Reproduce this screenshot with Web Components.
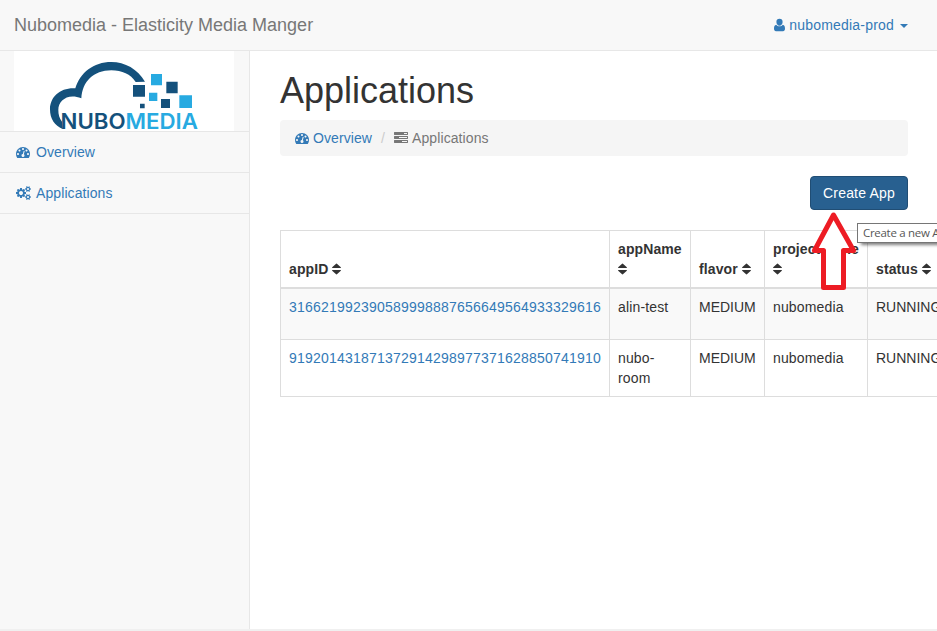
<!DOCTYPE html>
<html lang="en">
<head>
<meta charset="utf-8">
<title>Nubomedia - Elasticity Media Manger</title>
<style>
html,body{margin:0;height:100%;overflow:hidden}
body{font:14px/20px "Liberation Sans",Arial,sans-serif;color:#333;background:#fff}
</style>
</head>
<body>
<nubo-app></nubo-app>
<script>
const define=(name,html)=>customElements.define(name,class extends HTMLElement{
  constructor(){super();this.attachShadow({mode:'open'}).innerHTML=html;}
});

const GEAR='v140q0 16-149 31-12 27-30 52 51 113 51 138 0 4-4 7-122 71-124 71-8 0-46-47t-52-68q-20 2-30 2t-30-2q-14 21-52 68t-46 47q-2 0-124-71-4-3-4-7 0-25 51-138-18-25-30-52-149-15-149-31v-140q0-16 149-31 13-29 30-52-51-113-51-138 0-4 4-7 4-2 35-20t59-34 30-16q8 0 46 46.5t52 67.5q20-2 30-2t30 2q51-71 92-112l6-2q4 0 124 70 4 3 4 7 0 25-51 138 17 23 30 52 149 15 149 31z';
const BAR='v256q0 26-19 45t-45 19h-1664q-26 0-45-19t-19-45v-256q0-26 19-45t45-19h1664q26 0 45 19t19 45z';
const ICONS={
  dashboard:['0 0 1792 1792',14,'M384 1152q0-53-37.5-90.5t-90.5-37.5-90.5 37.5-37.5 90.5 37.5 90.5 90.5 37.5 90.5-37.5 37.5-90.5zm192-448q0-53-37.5-90.5t-90.5-37.5-90.5 37.5-37.5 90.5 37.5 90.5 90.5 37.5 90.5-37.5 37.5-90.5zm428 481l101-382q6-26-7.5-48.5t-38.5-29.5-48 6.5-30 39.5l-101 382q-60 5-107 43.5t-63 98.5q-20 77 20 146t117 89 146-20 89-117q16-60-6-117t-72-91zm660-33q0-53-37.5-90.5t-90.5-37.5-90.5 37.5-37.5 90.5 37.5 90.5 90.5 37.5 90.5-37.5 37.5-90.5zm-640-640q0-53-37.5-90.5t-90.5-37.5-90.5 37.5-37.5 90.5 37.5 90.5 90.5 37.5 90.5-37.5 37.5-90.5zm448 192q0-53-37.5-90.5t-90.5-37.5-90.5 37.5-37.5 90.5 37.5 90.5 90.5 37.5 90.5-37.5 37.5-90.5zm320 448q0 261-141 483-19 29-54 29h-1402q-35 0-54-29-141-221-141-483 0-182 71-348t191-286 286-191 348-71 348 71 286 191 191 286 71 348z'],
  cogs:['0 0 1920 1792',15,'M896 896q0-106-75-181t-181-75-181 75-75 181 75 181 181 75 181-75 75-181zm768 512q0-52-38-90t-90-38-90 38-38 90q0 53 37.5 90.5t90.5 37.5 90.5-37.5 37.5-90.5zm0-1024q0-52-38-90t-90-38-90 38-38 90q0 53 37.5 90.5t90.5 37.5 90.5-37.5 37.5-90.5zm-384 421v185q0 10-7 19.5t-16 10.5l-155 24q-11 35-32 76 34 48 90 115 7 11 7 20 0 12-7 19-23 30-82.5 89.5t-78.5 59.5q-11 0-21-7l-115-90q-37 19-77 31-11 108-23 155-7 24-30 24h-186q-11 0-20-7.5t-10-17.5l-23-153q-34-10-75-31l-118 89q-7 7-20 7-11 0-21-8-144-133-144-160 0-9 7-19 10-14 41-53t47-61q-23-44-35-82l-152-24q-10-1-17-9.5t-7-19.5v-185q0-10 7-19.5t16-10.5l155-24q11-35 32-76-34-48-90-115-7-11-7-20 0-12 7-20 22-30 82-89t79-59q11 0 21 7l115 90q34-18 77-32 11-108 23-154 7-24 30-24h186q11 0 20 7.5t10 17.5l23 153q34 10 75 31l118-89q8-7 20-7 11 0 21 8 144 133 144 160 0 8-7 19-12 16-42 54t-45 60q23 48 34 82l152 23q10 2 17 10.5t7 19.5zM1920 1338'+GEAR+'M1920 314'+GEAR],
  user:['0 0 11 14',11,'M5.5 .8a3.100 3.300 0 0 1 3.100 3.300c0 2-1.300 3.700-3.100 3.700S2.400 6.100 2.400 4.100A3.100 3.300 0 0 1 5.500.8zM2.300 6.800C3.100 7.900 4.200 8.300 5.500 8.300S7.900 7.900 8.700 6.800C10.500 7 11 8.600 11 10.700 11 12.200 10.200 13.200 9 13.200H2C.8 13.200 0 12.200 0 10.700 0 8.600.5 7 2.300 6.800z'],
  tasks:['0 0 1792 1792',14,'M1024 1408h640v-128h-640v128zm-384-512h1024v-128h-1024v128zm640-512h384v-128h-384v128zM1792 1216'+BAR+'M1792 704'+BAR+'M1792 192'+BAR],
  sort:['384 0 1024 1792',9,'M1408 1088q0 26-19 45l-448 448q-19 19-45 19t-45-19l-448-448q-19-19-19-45t19-45 45-19h896q26 0 45 19t19 45zm0-384q0 26-19 45t-45 19h-896q-26 0-45-19t-19-45 19-45l448-448q19-19 45-19t45 19l448 448q19 19 19 45z']
};
customElements.define('fa-icon',class extends HTMLElement{
  constructor(){super();this.attachShadow({mode:'open'});}
  connectedCallback(){
    const [box,w,d]=ICONS[this.getAttribute('name')];
    this.shadowRoot.innerHTML=`<style>:host{display:inline-block;flex:none;width:${w}px;height:14px;vertical-align:-2px;line-height:0}svg{display:block}</style>
    <svg viewBox="${box}" width="${w}" height="14" preserveAspectRatio="none"><path fill="currentColor" fill-rule="evenodd" d="${d}"/></svg>`;
  }
});

define('top-bar',`<style>
:host{display:flex;justify-content:space-between;align-items:center;box-sizing:border-box;height:51px;padding:0 29px 1px 14px;background:#f8f8f8;border-bottom:1px solid #e7e7e7}
.brand{font-size:18px;color:#777}
.user{display:flex;align-items:center;color:#337ab7}
.name{margin-left:4px;letter-spacing:.2px}
.caret{margin:2px 0 0 6px;border:4px solid transparent;border-top-color:#337ab7;border-bottom:0}
</style><span class="brand">Nubomedia - Elasticity Media Manger</span>
<span class="user"><fa-icon name="user"></fa-icon><span class="name">nubomedia-prod</span><i class="caret"></i></span>`);

define('nubo-logo',`<style>:host{display:block;width:220px;height:80px;margin-left:14px;background:#fff}svg{display:block}text{font-family:Inter,sans-serif;font-weight:600;font-size:21.500px}</style>
<svg width="220" height="80" viewBox="14 51 220 80"><g transform="translate(40 55) scale(.33333)">
<path fill="#14517c" d="M315 80C293 42 255 21 214 21 160 21 121 53 106 100 62 97 30 125 30 163 30 192 44 212 68 222L66 200C58 190 55 178 55 165 55 138 82 114 124 130 127 80 160 46 214 46 246 46 272 58 287 81z"/>
<path fill="#14517c" d="M279 90h36v35h-36zM379 80h34v35h-34zM363 132h27v27h-27zM300 146h14v14h-14z"/>
<path fill="#27aae1" d="M333 57h33v34h-33zM327 113h25v25h-25zM418 121h38v38h-38z"/></g>
<text y="129.400" x="60.500" textLength="137.500" lengthAdjust="spacingAndGlyphs"><tspan fill="#14517c">NUBO</tspan><tspan fill="#27aae1">MEDIA</tspan></text></svg>`);

define('nav-item',`<style>:host{display:flex;align-items:center;height:40px;padding-left:16px;gap:5px;color:#337ab7;border-bottom:1px solid #e7e7e7}</style><slot name="icon"></slot><slot></slot>`);

define('side-bar',`<style>:host{display:block;box-sizing:border-box;width:250px;background:#f8f8f8;border-right:1px solid #e7e7e7}
nav{border-top:1px solid #e7e7e7}nav-item:first-child{gap:6px}nav-item{letter-spacing:.09px}</style>
<nubo-logo></nubo-logo><nav><nav-item><fa-icon slot="icon" name="dashboard"></fa-icon>Overview</nav-item><nav-item><fa-icon slot="icon" name="cogs"></fa-icon>Applications</nav-item></nav>`);

define('bread-crumb',`<style>:host{display:flex;align-items:center;height:36px;padding-left:15px;background:#f5f5f5;border-radius:4px;color:#777;letter-spacing:.09px}
a,.current{display:flex;align-items:center;gap:4px}a{color:#337ab7}.sep{color:#ccc;padding:0 9px}</style>
<a><fa-icon name="dashboard"></fa-icon>Overview</a><span class="sep">/</span><span class="current"><fa-icon name="tasks"></fa-icon>Applications</span>`);

define('primary-button',`<style>:host{display:block}button{display:block;box-sizing:border-box;width:98px;height:34px;padding:0;font:inherit;letter-spacing:.2px;color:#fff;background:#286090;border:1px solid #204d74;border-radius:4px}</style><button><slot></slot></button>`);

define('tool-tip',`<style>:host{display:block;position:absolute;left:857px;top:223px;box-sizing:border-box;height:20px;padding:0 6px 0 5px;border:1px solid #767676;background:#fff;box-shadow:3px 3px 3px -1px rgba(0,0,0,.5);font:11.500px/18px "Open Sans",sans-serif;letter-spacing:-.3px;color:#575757;white-space:nowrap}</style><slot></slot>`);

define('pointer-arrow',`<style>:host{position:absolute;left:808px;top:208px;width:52px;height:86px}svg{display:block}</style>
<svg width="52" height="86" viewBox="808 208 52 86"><path d="M833.500 215L814.500 250.500H823.500V287.500H843.500V250.500H853.500z" fill="#fff" stroke="#ed1c24" stroke-width="5" stroke-linejoin="round"/></svg>`);

const COLS=[['appID',329],['appName',81],['flavor',74],['projectName',103],['status',90]];
const ROWS=[['316621992390589998887656649564933329616','alin-test','MEDIUM','nubomedia','RUNNING'],['919201431871372914298977371628850741910','nubo-room','MEDIUM','nubomedia','RUNNING']];
define('app-table',`<style>:host{display:block}
table{table-layout:fixed;width:677px;border-collapse:collapse;border:1px solid #ddd}
th,td{padding:8px;text-align:left;border:1px solid #ddd;box-sizing:border-box}
th{vertical-align:bottom;border-bottom-width:2px;height:57px;padding:8px 7px 7.500px 8px;letter-spacing:.1px}
td{vertical-align:top}tbody tr:first-child{background:#f9f9f9}
tbody tr:first-child td{height:52px}tbody tr:last-child td{height:57px}
td:first-child{color:#337ab7;letter-spacing:.214px;white-space:nowrap}
td:nth-child(2),td:nth-child(4){letter-spacing:.15px}
</style><table><colgroup>${COLS.map(c=>`<col style="width:${c[1]}px">`).join('')}</colgroup>
<thead><tr>${COLS.map(c=>`<th>${c[0]} <fa-icon name="sort"></fa-icon></th>`).join('')}</tr></thead>
<tbody>${ROWS.map(r=>`<tr>${r.map(v=>`<td>${v}</td>`).join('')}</tr>`).join('')}</tbody></table>`);

define('nubo-app',`<style>
:host{display:flex;flex-direction:column;height:100vh;overflow:hidden;position:relative}
.body{display:flex;flex:1;min-height:0}
main{flex:1;min-width:0;padding:20px 29px 0 30px}
h1{margin:0 0 9px;font-size:36px;font-weight:500;line-height:40px}
.actions{display:flex;justify-content:flex-end;margin:20px 0}
footer{height:2px;background:#f0f0f0}
</style><top-bar></top-bar><div class="body"><side-bar></side-bar><main><h1>Applications</h1><bread-crumb></bread-crumb>
<div class="actions"><primary-button>Create App</primary-button></div><app-table></app-table></main></div><footer></footer>
<tool-tip>Create a new App</tool-tip><pointer-arrow></pointer-arrow>`);
</script>
</body>
</html>
